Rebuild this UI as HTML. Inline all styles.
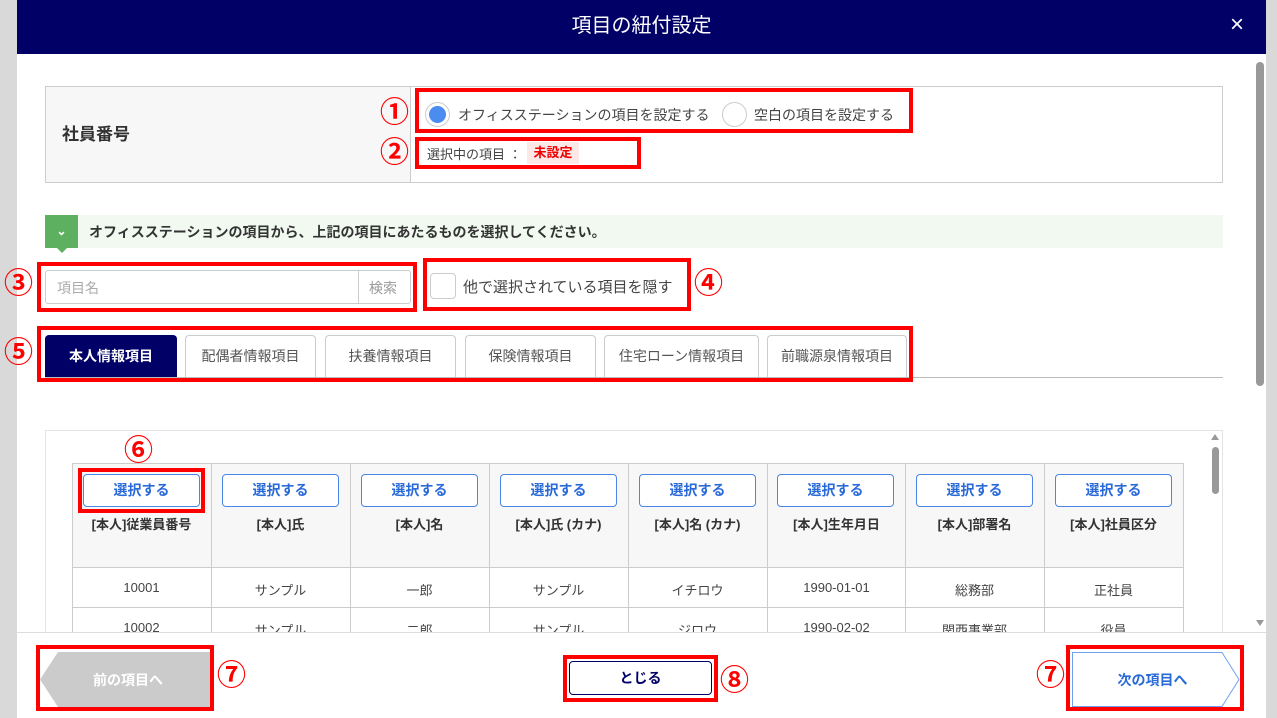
<!DOCTYPE html><html><head><meta charset="utf-8"><style>
*{box-sizing:border-box;margin:0;padding:0}
body{width:1277px;height:718px;overflow:hidden;background:#d9d9d9;font-family:"Liberation Sans","Noto Sans CJK JP",sans-serif;position:relative;color:#333}
.a{position:absolute}
.red{position:absolute;border:4px solid #f00}
.num{position:absolute;color:#f00;font-size:29px;line-height:30px;font-weight:bold}
.tab{position:absolute;top:335px;height:42px;border:1px solid #ccc;border-bottom:none;border-radius:4px 4px 0 0;background:#fff;font-size:14px;color:#555;text-align:center;line-height:40px}
.col{position:absolute;top:463px;width:139px;height:170px;border-left:1px solid #ccc}
.btn{position:absolute;top:474px;width:117px;height:33px;border:1px solid #4a86e8;border-radius:4px;color:#2a6ad8;font-weight:bold;font-size:14px;text-align:center;line-height:31px;background:#fff}
.hd{position:absolute;top:514px;width:139px;text-align:center;font-size:13px;font-weight:bold;color:#333}
.c{position:absolute;width:139px;text-align:center;font-size:13px;color:#444}
</style></head><body>
<div class="a" style="left:17px;top:0;width:1249px;height:718px;background:#fff"></div>
<div class="a" style="left:17px;top:0;width:1249px;height:54px;background:#000066;color:#fff;font-size:20px;text-align:center;line-height:52px">項目の紐付設定</div>
<div class="a" style="left:1230px;top:10px;color:#fff;font-size:24px;line-height:30px">×</div>
<div class="a" style="left:1256px;top:62px;width:8px;height:324px;background:#999;border-radius:4px"></div>
<div class="a" style="left:1256px;top:620px;width:0;height:0;border:4px solid transparent;border-top:6px solid #999"></div>

<div class="a" style="left:45px;top:86px;width:1178px;height:97px;border:1px solid #ccc"></div>
<div class="a" style="left:46px;top:87px;width:365px;height:95px;background:#f7f7f7;border-right:1px solid #ccc"></div>
<div class="a" style="left:62px;top:120px;font-size:17px;font-weight:bold;color:#333">社員番号</div>
<div class="a" style="left:425px;top:102px;width:25px;height:25px;border:1px solid #ccc;border-radius:50%;background:#fff"></div>
<div class="a" style="left:429px;top:106px;width:17px;height:17px;border-radius:50%;background:#4a8cef"></div>
<div class="a" style="left:458px;top:105px;font-size:14px;color:#444">オフィスステーションの項目を設定する</div>
<div class="a" style="left:722px;top:102px;width:25px;height:25px;border:1px solid #ccc;border-radius:50%"></div>
<div class="a" style="left:754px;top:105px;font-size:14px;color:#444">空白の項目を設定する</div>
<div class="a" style="left:427px;top:144px;font-size:13px;color:#444">選択中の項目 ：</div>
<div class="a" style="left:527px;top:142px;width:52px;height:22px;background:#fde8e8;color:#e00;font-size:13px;font-weight:bold;text-align:center;line-height:22px">未設定</div>

<div class="a" style="left:45px;top:215px;width:1178px;height:33px;background:#f1f9f1"></div>
<div class="a" style="left:45px;top:215px;width:33px;height:33px;background:#5cb060;color:#fff;text-align:center;line-height:33px;font-size:12px;font-weight:bold">⌄</div>
<div class="a" style="left:57px;top:248px;border:5px solid transparent;border-top:5px solid #5cb060"></div>
<div class="a" style="left:89px;top:222px;font-size:14px;font-weight:bold;color:#333">オフィスステーションの項目から、上記の項目にあたるものを選択してください。</div>

<div class="a" style="left:45px;top:270px;width:366px;height:34px;border:1px solid #ccc;border-radius:3px"></div>
<div class="a" style="left:358px;top:270px;width:1px;height:34px;background:#ccc"></div>
<div class="a" style="left:57px;top:278px;font-size:14px;color:#aaa">項目名</div>
<div class="a" style="left:369px;top:278px;font-size:14px;color:#999">検索</div>
<div class="a" style="left:430px;top:273px;width:26px;height:26px;border:1px solid #ccc;border-radius:4px"></div>
<div class="a" style="left:463px;top:276px;font-size:15px;color:#444">他で選択されている項目を隠す</div>

<div class="a" style="left:45px;top:377px;width:1178px;height:1px;background:#bbb"></div>
<div class="tab" style="left:45px;width:132px;background:#000066;color:#fff;font-weight:bold;border-color:#000066">本人情報項目</div>
<div class="tab" style="left:185px;width:131px">配偶者情報項目</div>
<div class="tab" style="left:325px;width:131px">扶養情報項目</div>
<div class="tab" style="left:465px;width:131px">保険情報項目</div>
<div class="tab" style="left:604px;width:155px">住宅ローン情報項目</div>
<div class="tab" style="left:767px;width:140px">前職源泉情報項目</div>

<div class="a" style="left:45px;top:430px;width:1178px;height:210px;border:1px solid #e4e4e4"></div>
<div class="a" style="left:72px;top:463px;width:1112px;height:105px;background:#f7f7f7;border-top:1px solid #ccc;border-bottom:1px solid #ccc"></div>
<div class="a" style="left:72px;top:607px;width:1112px;height:1px;background:#ccc"></div>
<div class="col" style="left:72px"></div><div class="col" style="left:211px"></div><div class="col" style="left:350px"></div><div class="col" style="left:489px"></div><div class="col" style="left:628px"></div><div class="col" style="left:767px"></div><div class="col" style="left:905px"></div><div class="col" style="left:1044px"></div><div class="col" style="left:1183px;width:1px"></div>
<div class="a" style="left:1212px;top:447px;width:7px;height:47px;background:#999;border-radius:4px"></div>
<div class="a" style="left:1211px;top:434px;border:4px solid transparent;border-bottom:6px solid #999;border-top:none"></div>

<div class="btn" style="left:83px">選択する</div><div class="btn" style="left:222px">選択する</div><div class="btn" style="left:361px">選択する</div><div class="btn" style="left:500px">選択する</div><div class="btn" style="left:639px">選択する</div><div class="btn" style="left:777px">選択する</div><div class="btn" style="left:916px">選択する</div><div class="btn" style="left:1055px">選択する</div>
<div class="hd" style="left:72px">[本人]従業員番号</div><div class="hd" style="left:211px">[本人]氏</div><div class="hd" style="left:350px">[本人]名</div><div class="hd" style="left:489px">[本人]氏 (カナ)</div><div class="hd" style="left:628px">[本人]名 (カナ)</div><div class="hd" style="left:767px">[本人]生年月日</div><div class="hd" style="left:905px">[本人]部署名</div><div class="hd" style="left:1044px">[本人]社員区分</div>
<div class="c" style="left:72px;top:580px">10001</div><div class="c" style="left:211px;top:580px">サンプル</div><div class="c" style="left:350px;top:580px">一郎</div><div class="c" style="left:489px;top:580px">サンプル</div><div class="c" style="left:628px;top:580px">イチロウ</div><div class="c" style="left:767px;top:580px">1990-01-01</div><div class="c" style="left:905px;top:580px">総務部</div><div class="c" style="left:1044px;top:580px">正社員</div>
<div class="c" style="left:72px;top:620px">10002</div><div class="c" style="left:211px;top:620px">サンプル</div><div class="c" style="left:350px;top:620px">二郎</div><div class="c" style="left:489px;top:620px">サンプル</div><div class="c" style="left:628px;top:620px">ジロウ</div><div class="c" style="left:767px;top:620px">1990-02-02</div><div class="c" style="left:905px;top:620px">関西事業部</div><div class="c" style="left:1044px;top:620px">役員</div>

<div class="a" style="left:17px;top:632px;width:1249px;height:86px;background:#fff;border-top:1px solid #ddd"></div>
<svg class="a" style="left:40px;top:652px" width="170" height="55"><polygon points="18,0 170,0 170,55 18,55 0,27.5" fill="#cbcbcb"/></svg>
<div class="a" style="left:58px;top:670px;width:140px;text-align:center;color:#fff;font-weight:bold;font-size:14px">前の項目へ</div>
<div class="a" style="left:569px;top:661px;width:143px;height:34px;border:1px solid #000066;border-radius:4px;text-align:center;line-height:32px;font-weight:bold;font-size:14px;color:#000066">とじる</div>
<svg class="a" style="left:1072px;top:652px" width="168" height="55"><polygon points="0.5,0.5 150,0.5 167,27.5 150,54.5 0.5,54.5" fill="#fff" stroke="#6fa0ee"/></svg>
<div class="a" style="left:1080px;top:670px;width:145px;text-align:center;color:#2a6ad8;font-weight:bold;font-size:14px">次の項目へ</div>

<div class="red" style="left:415px;top:88px;width:498px;height:45px"></div>
<div class="red" style="left:415px;top:137px;width:226px;height:32px"></div>
<div class="red" style="left:37px;top:262px;width:380px;height:50px"></div>
<div class="red" style="left:423px;top:258px;width:268px;height:53px"></div>
<div class="red" style="left:37px;top:326px;width:876px;height:56px"></div>
<div class="red" style="left:78px;top:468px;width:127px;height:45px"></div>
<div class="red" style="left:36px;top:645px;width:178px;height:66px"></div>
<div class="red" style="left:563px;top:655px;width:155px;height:47px"></div>
<div class="red" style="left:1066px;top:645px;width:178px;height:66px"></div>
<div class="num" style="left:380px;top:98px">①</div>
<div class="num" style="left:380px;top:138px">②</div>
<div class="num" style="left:4px;top:269px">③</div>
<div class="num" style="left:694px;top:269px">④</div>
<div class="num" style="left:4px;top:338px">⑤</div>
<div class="num" style="left:124px;top:436px">⑥</div>
<div class="num" style="left:217px;top:661px">⑦</div>
<div class="num" style="left:720px;top:666px">⑧</div>
<div class="num" style="left:1036px;top:661px">⑦</div>
</body></html>
